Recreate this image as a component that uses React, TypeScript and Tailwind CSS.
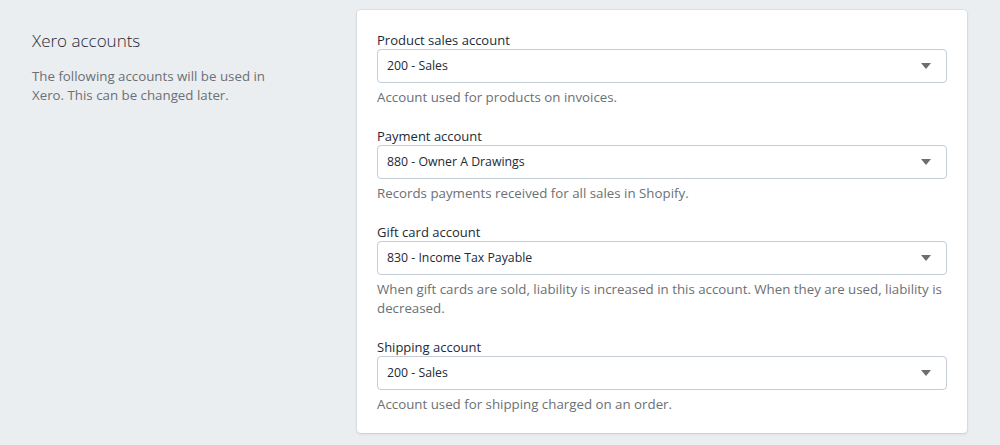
import React from "react";

const fields = [
  { label: "Product sales account", value: "200 - Sales", help: "Account used for products on invoices." },
  { label: "Payment account", value: "880 - Owner A Drawings", help: "Records payments received for all sales in Shopify." },
  {
    label: "Gift card account",
    value: "830 - Income Tax Payable",
    help: "When gift cards are sold, liability is increased in this account. When they are used, liability is decreased.",
  },
  { label: "Shipping account", value: "200 - Sales", help: "Account used for shipping charged on an order." },
];

function Select({ value }: { value: string }) {
  return (
    <div className="flex items-center justify-between h-[34px] rounded-[4px] border border-[#c4cdd5] bg-white pl-[9px] pr-[15px]">
      <span className="text-[12.3px] text-[#212b36]">{value}</span>
      <svg width="10" height="6" viewBox="0 0 10 6">
        <path d="M0 0 L10 0 L5 6 Z" fill="#6b6f73" />
      </svg>
    </div>
  );
}

export default function App() {
  return (
    <div
      className="min-h-[445px] bg-[#ebeef0] flex pt-[10px] pb-[12px]"
      style={{ fontFamily: '"Open Sans", "Noto Sans", sans-serif' }}
    >
      <div className="w-[357px] pl-[32px] pt-[19px] pr-[70px]">
        <h2 className="text-[17px] leading-[24px] text-[#212b36] font-light">Xero accounts</h2>
        <p className="mt-[14px] text-[13.3px] leading-[19px] text-[#6b7075]">
          The following accounts will be used in Xero. This can be changed later.
        </p>
      </div>
      <div className="w-[610px] bg-white rounded-[4px] shadow-[0_0_0_1px_rgba(63,63,68,0.05),0_1px_3px_0_rgba(63,63,68,0.15)] px-[20px] pt-[21px] pb-[18px] flex flex-col gap-[20px]">
        {fields.map((f) => (
          <div key={f.label}>
            <div className="text-[13px] leading-[18px] text-[#212b36]">{f.label}</div>
            <Select value={f.value} />
            <div className="mt-[5px] text-[13.3px] leading-[19px] text-[#6b7075]">{f.help}</div>
          </div>
        ))}
      </div>
    </div>
  );
}
